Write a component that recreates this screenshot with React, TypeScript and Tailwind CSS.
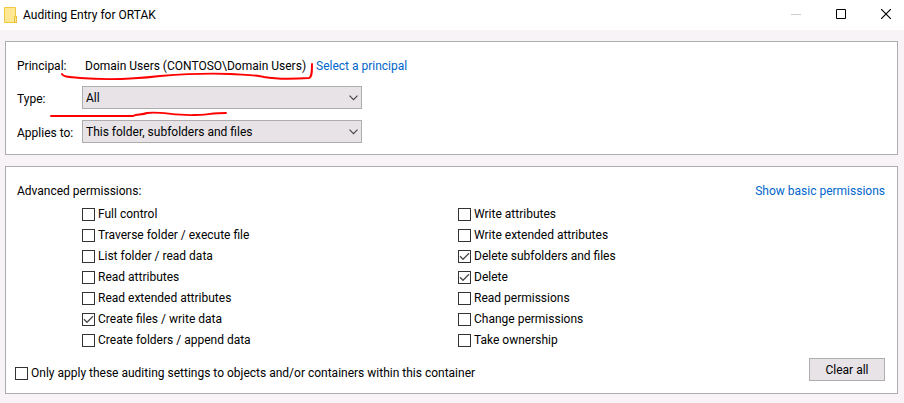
import React from 'react';

interface Permission {
  id: string;
  label: string;
  checked?: boolean;
}

const leftPermissions: Permission[] = [
  { id: 'full-control', label: 'Full control' },
  { id: 'traverse', label: 'Traverse folder / execute file' },
  { id: 'list-folder', label: 'List folder / read data' },
  { id: 'read-attributes', label: 'Read attributes' },
  { id: 'read-extended', label: 'Read extended attributes' },
  { id: 'create-files', label: 'Create files / write data', checked: true },
  { id: 'create-folders', label: 'Create folders / append data' },
];

const rightPermissions: Permission[] = [
  { id: 'write-attributes', label: 'Write attributes' },
  { id: 'write-extended', label: 'Write extended attributes' },
  { id: 'delete-subfolders', label: 'Delete subfolders and files', checked: true },
  { id: 'delete', label: 'Delete', checked: true },
  { id: 'read-permissions', label: 'Read permissions' },
  { id: 'change-permissions', label: 'Change permissions' },
  { id: 'take-ownership', label: 'Take ownership' },
];

const Checkbox: React.FC<Permission> = ({ id, label, checked }) => (
  <div className="flex h-[21px] items-center gap-[3px]">
    <span className="relative flex size-[13px] shrink-0">
      <input
        id={id}
        type="checkbox"
        defaultChecked={checked}
        className="peer size-[13px] appearance-none border border-[#333333] bg-white"
      />
      <svg
        viewBox="0 0 13 13"
        className="pointer-events-none absolute inset-0 hidden size-[13px] peer-checked:block"
        fill="none"
        stroke="#4a4a4a"
        strokeWidth="1.3"
      >
        <path d="M2 6.3 L5 9.3 L11 3.3" />
      </svg>
    </span>
    <label htmlFor={id} className="whitespace-nowrap pb-0.5">
      {label}
    </label>
  </div>
);

const SelectRow: React.FC<{ id: string; label: string; options: string[] }> = ({ id, label, options }) => (
  <div className="flex items-center">
    <label htmlFor={id} className="w-[65px] shrink-0 pt-0.5">
      {label}
    </label>
    <div className="relative w-[280px]">
      <select
        id={id}
        className="block h-[23px] w-full appearance-none border border-[#adadad] bg-[#e7e3e7] pl-[3px] pr-6 text-black outline-none"
      >
        {options.map((option) => (
          <option key={option}>{option}</option>
        ))}
      </select>
      <svg
        viewBox="0 0 9 6"
        className="pointer-events-none absolute right-1 top-[9px] h-1.5 w-[9px]"
        fill="none"
        stroke="#444444"
        strokeWidth="1.1"
      >
        <path d="M0.5 0.7 L4.5 4.7 L8.5 0.7" />
      </svg>
    </div>
  </div>
);

const TitleBar: React.FC = () => (
  <header className="flex h-[30px] items-center bg-white pl-1">
    <svg viewBox="0 0 13 16" className="h-4 w-[13px]">
      <path d="M0.5 0.5 H11.5 V9 H12.5 V15.5 H0.5 Z" fill="#ffe793" stroke="#edc843" />
      <path d="M10.5 15.5 V9.5 H12.5 V15.5 Z" fill="#ffe793" stroke="#e8c03a" />
    </svg>
    <h1 className="ml-1.5 flex-1">Auditing Entry for ORTAK</h1>
    <div className="flex h-full gap-[9px] pb-0.5">
      <button aria-label="Minimize" disabled className="flex w-9 items-center justify-center">
        <svg viewBox="0 0 10 10" className="size-2.5" stroke="#cccccc">
          <path d="M0 5.5 H10" />
        </svg>
      </button>
      <button aria-label="Maximize" className="flex w-9 items-center justify-center">
        <svg viewBox="0 0 10 10" className="size-2.5" fill="none" stroke="#000000">
          <path d="M0.5 0.5 H9.5 V9.5 H0.5 Z" />
        </svg>
      </button>
      <button aria-label="Close" className="flex w-9 items-center justify-center">
        <svg viewBox="0 0 10 10" className="size-2.5" stroke="#000000" strokeWidth="1.2">
          <path d="M0 0 L10 10 M10 0 L0 10" />
        </svg>
      </button>
    </div>
  </header>
);

// red pen marks drawn over the principal and type rows
const PenMarks: React.FC = () => (
  <svg
    viewBox="0 0 270 60"
    className="pointer-events-none absolute left-11 top-5 h-[60px] w-[270px]"
    fill="none"
    stroke="#ff0000"
    strokeWidth="1.9"
    strokeLinecap="round"
    strokeLinejoin="round"
  >
    <path d="M12 12 C13 15 20 15 30 16 C55 18 85 17 110 14 C135 12 160 11 180 12 C195 13 208 13 214 15 C225 17 245 17 259 16 C262 15 262 10 262 2" />
    <path d="M1 54 H83 C86 52 92 53 97 51 C110 49 125 54 145 53 C155 53 163 51 176 51" />
  </svg>
);

export default function App() {
  return (
    <div className="min-h-screen bg-[#f7f3f7] font-['Roboto','Noto_Sans',sans-serif] text-[12px] leading-4 text-black">
      <TitleBar />

      <main className="flex flex-col gap-[11px] pb-[9px] pl-[5px] pr-1.5 pt-[11px]">
        <section className="relative flex flex-col gap-[11px] border border-[#adadb0] bg-white pb-[11px] pl-[11px] pt-4">
          <div className="flex items-center pb-px">
            <span className="w-[68px]">Principal:</span>
            <span className="w-[231px] whitespace-nowrap">Domain Users (CONTOSO\Domain Users)</span>
            <a href="#principal" className="text-[#0066cc]">
              Select a principal
            </a>
          </div>
          <SelectRow id="type" label="Type:" options={['All', 'Success', 'Fail']} />
          <SelectRow
            id="applies-to"
            label="Applies to:"
            options={['This folder, subfolders and files', 'This folder only', 'Files only']}
          />
          <PenMarks />
        </section>

        <section className="border border-[#adadb0] bg-white pb-[9px] pl-[9px] pr-3 pt-4">
          <div className="flex items-center justify-between pb-px pl-0.5">
            <h2>Advanced permissions:</h2>
            <a href="#basic" className="text-[#0066cc]">
              Show basic permissions
            </a>
          </div>

          <div className="grid grid-cols-[376px_1fr] pl-[67px] pt-1">
            <div>
              {leftPermissions.map((permission) => (
                <Checkbox key={permission.id} {...permission} />
              ))}
            </div>
            <div>
              {rightPermissions.map((permission) => (
                <Checkbox key={permission.id} {...permission} />
              ))}
            </div>
          </div>

          <div className="flex items-start justify-between pt-[7px]">
            <div className="pt-[5px]">
              <Checkbox
                id="only-apply"
                label="Only apply these auditing settings to objects and/or containers within this container"
              />
            </div>
            <button className="h-[23px] w-[76px] border border-[#adadad] bg-[#e7e3e7]">Clear all</button>
          </div>
        </section>
      </main>
    </div>
  );
}
